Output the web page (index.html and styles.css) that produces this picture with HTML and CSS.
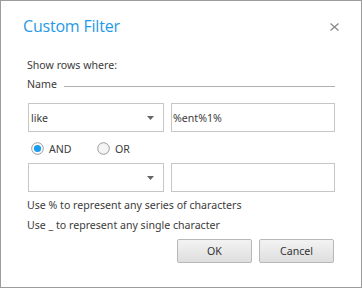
FILE: index.html
```html
<!DOCTYPE html>
<html>
<head>
<meta charset="utf-8">
<link rel="stylesheet" href="styles.css">
</head>
<body>
<div class="dialog">
  <div class="header">
    <div class="title">Custom Filter</div>
    <svg class="close" width="9" height="8" viewBox="0 0 9 8"><path d="M0.5 0.5 L8.5 7.5 M8.5 0.5 L0.5 7.5" stroke="#8a8a8a" stroke-width="1.3" fill="none"/></svg>
  </div>
  <div class="body">
    <div class="label">Show rows where:</div>
    <div class="group"><span>Name</span><div class="rule"></div></div>
    <div class="row first">
      <div class="combo"><span>like</span><svg width="7" height="4" viewBox="0 0 7 4"><path d="M0 0 H7 L3.5 4 Z" fill="#666"/></svg></div>
      <div class="text">%ent%1%</div>
    </div>
    <div class="radios">
      <label class="radio and"><svg width="13" height="13" viewBox="0 0 13 13"><circle cx="6.5" cy="6.5" r="5.8" fill="#fff" stroke="#9a9a9a"/><circle cx="6.5" cy="6.5" r="3.6" fill="#1a9cf0"/></svg>AND</label>
      <label class="radio"><svg width="13" height="13" viewBox="0 0 13 13"><circle cx="6.5" cy="6.5" r="5.8" fill="#f4f4f4" stroke="#9a9a9a"/></svg>OR</label>
    </div>
    <div class="row second">
      <div class="combo"><span></span><svg width="7" height="4" viewBox="0 0 7 4"><path d="M0 0 H7 L3.5 4 Z" fill="#666"/></svg></div>
      <div class="text"></div>
    </div>
    <div class="hint first">Use % to represent any series of characters</div>
    <div class="hint second">Use _ to represent any single character</div>
    <div class="buttons">
      <div class="btn">OK</div>
      <div class="btn">Cancel</div>
    </div>
  </div>
</div>
</body>
</html>
```
FILE: styles.css
```css
html, body { margin: 0; padding: 0; background: #fff; }
.dialog {
  width: 362px; height: 288px; box-sizing: border-box;
  border: 1px solid #9c9c9c; background: #fff;
  font-family: "Noto Sans", "DejaVu Sans", sans-serif; font-size: 10.6px; color: #3b3b3b;
}
.header { display: flex; justify-content: space-between; align-items: flex-start; padding: 14px 22px 0 22px; height: 42px; box-sizing: border-box; }
.title { font-family: "Open Sans", sans-serif; font-size: 16px; line-height: 22px; color: #1f9ae6; letter-spacing: -0.2px; }
.close { margin-top: 8px; }
.body { padding: 0 26px 0 26px; }
.label { line-height: 15px; margin-top: 15px; }
.group { display: flex; align-items: center; margin-top: 4px; line-height: 15px; }
.group span { margin-right: 7px; }
.rule { flex: 1; height: 1px; background: #b0b0b0; margin-top: 3px; }
.row { display: grid; grid-template-columns: 136px 164px; column-gap: 7px; margin-left: 1px; }
.row.first { margin-top: 11px; }
.row.second { margin-top: 4px; }
.combo, .text { height: 29px; box-sizing: border-box; border: 1px solid #c6c6c6; display: flex; align-items: center; background: #fff; }
.combo { justify-content: space-between; padding: 0 9px 0 2px; }
.combo svg { margin-top: 1px; }
.text { padding: 0 1px; }
.radios { display: flex; height: 21px; align-items: center; margin-top: 6px; margin-left: 4px; }
.radio { display: flex; align-items: center; }
.radio.and { width: 66px; }
.radio svg { margin-right: 5px; }
.hint { line-height: 15px; }
.hint.first { margin-top: 6px; }
.hint.second { margin-top: 5px; }
.buttons { display: flex; justify-content: flex-end; gap: 7px; margin-top: 6px; margin-right: 1px; }
.btn {
  width: 75px; height: 24px; box-sizing: border-box; border: 1px solid #b8b8b8; border-radius: 2px;
  background: linear-gradient(#f3f3f3, #dedede); display: flex; align-items: center; justify-content: center;
  color: #333;
}
```
